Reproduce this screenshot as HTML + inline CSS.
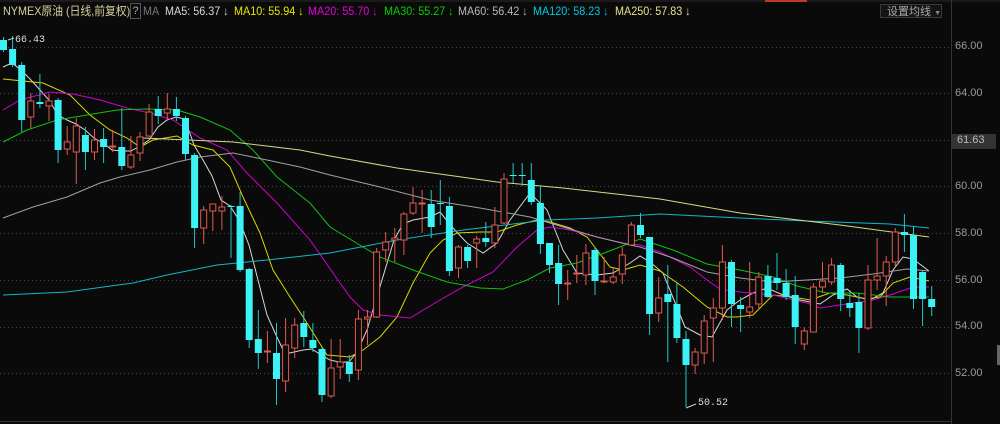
<!DOCTYPE html>
<html><head><meta charset="utf-8"><style>
body{margin:0;background:#0a0a0a;width:1000px;height:424px;overflow:hidden;font-family:"Liberation Sans","Noto Sans CJK SC",sans-serif;}
#w{position:relative;width:1000px;height:424px;}
.t{position:absolute;top:4px;font-size:12px;white-space:nowrap;line-height:14px;transform:scaleX(0.9);transform-origin:left top}
.ax{position:absolute;left:955px;font-size:11px;color:#9a9a9a}
</style></head><body><div id="w">
<svg id="s" width="1000" height="424" style="position:absolute;left:0;top:0">
<g stroke="#2a2a2a" stroke-width="1"><line x1="0" y1="1" x2="1000" y2="1"/></g>
<rect x="765" y="0" width="42" height="2" fill="#c03a20"/>
<g stroke="#444" stroke-dasharray="1,3" stroke-width="1">
<line x1="0" y1="47.5" x2="950" y2="47.5"/><line x1="0" y1="93.5" x2="950" y2="93.5"/><line x1="0" y1="140.5" x2="950" y2="140.5"/><line x1="0" y1="186.5" x2="950" y2="186.5"/><line x1="0" y1="233.5" x2="950" y2="233.5"/><line x1="0" y1="280.5" x2="950" y2="280.5"/><line x1="0" y1="327.5" x2="950" y2="327.5"/><line x1="0" y1="373.5" x2="950" y2="373.5"/>
</g>
<line x1="951.5" y1="0" x2="951.5" y2="424" stroke="#333"/>
<line x1="0" y1="421.5" x2="951" y2="421.5" stroke="#333"/>
<rect x="952" y="134" width="44" height="15" fill="#333"/>
<rect x="997" y="345" width="3" height="20" fill="#666"/>
<g id="ma" fill="none" stroke-width="1"></g>
<g id="c"></g>
<g stroke="#ccc" fill="none"><path d="M14 38 L8 40 M686 408 L696 404"/></g>
</svg>
<div class="t" style="left:3px;color:#d4d0a0">NYMEX原油 (日线,前复权)</div>
<div style="position:absolute;left:130px;top:3px;width:9px;height:14px;border:1px solid #555;color:#aaa;font-size:11px;line-height:14px;text-align:center">?</div>
<div class="t" style="left:143px;color:#777">MA</div>
<div class="t" style="left:165px;color:#d8d8d8">MA5: 56.37 ↓</div>
<div class="t" style="left:234px;color:#e6e600">MA10: 55.94 ↓</div>
<div class="t" style="left:308px;color:#e000e0">MA20: 55.70 ↓</div>
<div class="t" style="left:384px;color:#00d000">MA30: 55.27 ↓</div>
<div class="t" style="left:458px;color:#b8b8b8">MA60: 56.42 ↓</div>
<div class="t" style="left:533px;color:#00c8e0">MA120: 58.23 ↓</div>
<div class="t" style="left:615px;color:#e6e090">MA250: 57.83 ↓</div>
<div style="position:absolute;left:880px;top:4px;width:62px;height:14px;border:1px solid #3a3a3a;background:#141414;color:#aaa;font-size:11px;line-height:14px;padding-left:6px;box-sizing:border-box">设置均线 <span style="font-size:7px;color:#888">▼</span></div>
<div class="ax" style="top:40px">66.00</div>
<div class="ax" style="top:87px">64.00</div>
<div class="ax" style="top:134px;left:957px;color:#bbb">61.63</div>
<div class="ax" style="top:180px">60.00</div>
<div class="ax" style="top:227px">58.00</div>
<div class="ax" style="top:274px">56.00</div>
<div class="ax" style="top:320px">54.00</div>
<div class="ax" style="top:367px">52.00</div>
<div style="position:absolute;left:15px;top:35px;font-size:10px;color:#ddd;font-family:'Liberation Mono',monospace">66.43</div>
<div style="position:absolute;left:698px;top:398px;font-size:10px;color:#ddd;font-family:'Liberation Mono',monospace">50.52</div>
</div>
<script>
var C=[[40,50,37,52,0],[49,65,36,67,0],[65,120,62,132,0],[101,117,93,128,1],[102,104,74,108,0],[101,106,94,121,1],[100,150,98,163,0],[142,149,126,155,1],[126,152,118,184,1],[135,152,127,170,0],[140,152,129,160,1],[139,147,128,163,0],[146,147,130,152,1],[147,166,108,170,0],[155,167,136,169,1],[137,153,132,161,1],[112,136,104,137,1],[109,116,96,124,0],[109,113,93,120,1],[109,116,97,121,0],[118,154,116,160,0],[155,228,153,248,0],[210,228,206,244,1],[204,211,204,231,1],[207,211,196,230,1],[206,207,205,258,0],[206,270,192,272,0],[269,340,268,348,0],[339,353,310,369,0],[351,352,331,363,1],[353,379,323,405,0],[345,381,318,392,1],[325,348,318,358,1],[323,337,311,347,0],[340,348,323,352,0],[349,395,347,402,0],[368,396,339,398,1],[362,367,339,379,1],[362,374,355,382,0],[319,370,310,380,1],[317,319,310,345,1],[252,317,248,318,1],[242,250,232,262,1],[238,240,228,262,1],[214,240,212,255,1],[203,213,187,215,1],[203,204,190,233,1],[204,227,190,238,0],[203,204,180,225,0],[206,271,197,276,0],[247,268,245,278,1],[247,261,245,268,0],[239,243,236,268,1],[238,242,222,247,0],[225,243,207,248,1],[179,223,173,224,1],[175,176,163,183,0],[175,176,163,186,0],[180,202,163,205,0],[203,244,185,254,0],[243,265,243,273,0],[263,284,245,305,0],[283,284,270,300,1],[273,274,255,283,1],[253,275,244,285,1],[250,281,247,295,0],[281,282,257,283,1],[277,282,268,284,1],[255,274,247,284,1],[225,245,222,246,1],[225,235,213,238,0],[237,314,237,335,0],[298,313,277,322,1],[294,302,265,362,0],[304,338,283,343,0],[339,365,331,407,0],[352,365,348,374,1],[321,353,315,364,1],[308,318,298,362,1],[262,308,245,320,1],[262,304,260,327,0],[305,309,297,332,0],[307,312,262,318,1],[277,304,272,310,1],[276,297,265,298,0],[278,283,253,290,0],[283,297,269,300,0],[295,327,276,344,0],[331,344,327,350,1],[287,332,283,332,1],[281,287,262,293,1],[265,282,258,285,1],[265,299,263,311,0],[303,308,293,317,0],[302,328,293,353,0],[280,328,265,330,1],[276,280,238,290,1],[262,276,256,306,1],[232,262,228,266,1],[232,235,214,252,0],[235,299,226,309,0],[272,299,270,326,0],[299,307,286,316,0]];
var g=document.getElementById('c'),h='';
C.forEach(function(d,i){var x=3.5+9.1*i,t=d[0],b=d[1];if(b-t<1)b=t+1;
if(d[4]){h+='<line x1="'+x+'" y1="'+d[2]+'" x2="'+x+'" y2="'+t+'" stroke="#e05a50"/><line x1="'+x+'" y1="'+b+'" x2="'+x+'" y2="'+d[3]+'" stroke="#e05a50"/><rect x="'+(x-3)+'" y="'+t+'" width="6" height="'+(b-t)+'" fill="#0a0a0a" stroke="#e05a50"/>';}
else{h+='<line x1="'+x+'" y1="'+d[2]+'" x2="'+x+'" y2="'+d[3]+'" stroke="#20c8cc"/><rect x="'+(x-3.5)+'" y="'+t+'" width="7" height="'+(b-t)+'" fill="#3cf2f4"/>';}});
g.innerHTML=h;
var M=[
['#d8d8d8','3,67 12,63 21,70 31,80 40,90 49,100 58,115 67,120 76,124 85,130 94,138 103,143 112,150 122,151 131,151 140,146 149,140 158,127 167,120 176,117 185,119 194,145 203,160 212,176 221,200 230,206 239,220 249,245 258,280 267,315 276,335 285,354 294,352 303,350 312,349 321,355 330,360 339,362 349,362 357,352 367,330 376,300 385,270 394,240 403,224 413,220 430,217 440,212 453,228 467,243 483,253 497,243 510,220 530,193 547,210 563,250 577,273 597,275 613,273 630,263 640,256 650,262 663,273 685,327 700,335 712,337 727,310 740,300 753,293 767,288 783,295 800,300 820,304 833,295 847,289 857,297 870,300 883,293 893,270 903,257 913,259 929,271'],
['#d8d800','3,79 43,83 70,95 90,115 110,130 127,138 140,147 153,140 177,136 193,145 213,150 230,167 243,197 260,233 273,270 290,297 307,323 327,355 350,357 363,350 380,337 397,317 413,283 430,253 443,240 457,233 480,232 497,232 517,225 537,220 550,222 570,228 587,237 597,250 610,267 623,270 640,265 660,271 683,287 707,307 727,317 737,317 753,315 773,295 793,297 810,300 830,293 847,295 867,299 880,297 893,283 910,277 929,281'],
['#d000d0','3,110 20,100 50,92 73,94 100,100 127,108 150,113 173,120 200,138 227,150 247,173 277,203 310,240 333,273 350,297 363,310 380,315 410,318 440,300 463,287 493,272 517,247 537,230 550,227 570,230 597,237 623,243 640,245 660,252 690,267 707,280 720,289 740,292 773,295 807,303 820,308 840,305 873,300 893,294 913,287 929,287'],
['#10c010','3,142 27,130 57,120 87,115 117,110 147,109 177,110 200,117 230,130 253,150 277,177 310,203 330,227 363,247 380,257 413,270 447,282 480,288 503,289 527,280 550,268 577,263 607,252 630,243 640,239 673,250 707,264 740,270 773,277 797,286 827,293 857,293 890,297 929,297'],
['#a0a0a0','3,218 33,207 67,197 100,183 120,177 150,170 177,162 200,157 233,153 267,160 300,167 330,175 380,187 430,200 480,208 530,217 563,227 597,237 630,245 640,247 673,258 707,272 740,278 773,282 807,280 840,278 873,274 907,269 929,271'],
['#10b8c8','3,295 67,292 133,283 167,275 217,265 267,260 330,253 397,240 463,230 513,224 547,220 597,218 660,214 740,218 807,221 890,224 929,228'],
['#d8d888','143,138 233,142 300,150 330,156 397,168 497,182 563,188 660,199 740,213 840,225 929,237']];
var m='';M.forEach(function(a){m+='<polyline points="'+a[1]+'" stroke="'+a[0]+'"/>';});
document.getElementById('ma').innerHTML=m;
</script>
</body></html>
